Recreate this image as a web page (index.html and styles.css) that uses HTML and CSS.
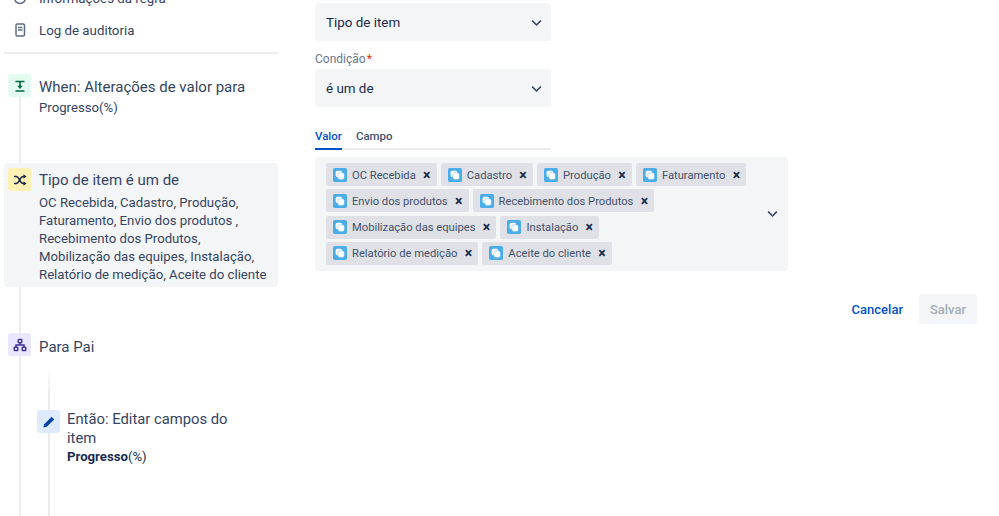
FILE: index.html
```html
<!DOCTYPE html>
<html lang="pt">
<head>
<meta charset="utf-8">
<title>Regra</title>
<link rel="stylesheet" href="styles.css">
</head>
<body>
<div class="page">
  <aside class="side">
    <div class="navrow">
      <svg class="navicon" viewBox="0 0 16 16"><circle cx="8" cy="8" r="5.500" fill="none" stroke="#5e6c84" stroke-width="1.500"/></svg>
      <span>Informações da regra</span>
    </div>
    <div class="navrow">
      <svg class="navicon" viewBox="0 0 16 16"><rect x="4" y="2" width="8.500" height="12" rx="1.300" fill="none" stroke="#5e6c84" stroke-width="1.500"/><path d="M6 5.500h4.500M6 8h4.500" stroke="#5e6c84" stroke-width="1.300"/></svg>
      <span>Log de auditoria</span>
    </div>
    <div class="rule"></div>
    <div class="flow">
      <div class="step step-trigger">
        <span class="badge badge-green">
          <svg viewBox="0 0 14 14"><path d="M2.500 2.500h9M2.500 12h9" stroke="#006644" stroke-width="1.600"/><path d="M7 3v5" stroke="#006644" stroke-width="1.600"/><path d="M4.300 6.800h5.400L7 10z" fill="#006644"/></svg>
        </span>
        <div class="stepbody">
          <div class="steptitle">When: Alterações de valor para</div>
          <div class="stepdesc">Progresso(%)</div>
        </div>
      </div>
      <div class="step step-cond">
        <span class="badge badge-yellow">
          <svg viewBox="0 0 14 14"><path d="M1 3.500h2.400c2.800 0 3.600 7 6.600 7h2M1 10.500h2.400c2.800 0 3.600-7 6.600-7h2" fill="none" stroke="#172b4d" stroke-width="1.500"/><path d="M10.500 1.300l3 2.200-3 2.200zM10.500 8.300l3 2.200-3 2.200z" fill="#172b4d"/></svg>
        </span>
        <div class="stepbody">
          <div class="steptitle">Tipo de item é um de</div>
          <div class="stepdesc">OC Recebida, Cadastro, Produção,<br>Faturamento, Envio dos produtos ,<br>Recebimento dos Produtos,<br>Mobilização das equipes, Instalação,<br>Relatório de medição, Aceite do cliente</div>
        </div>
      </div>
      <div class="step step-parent">
        <span class="badge badge-purple">
          <svg viewBox="0 0 14 14"><g fill="none" stroke="#403294" stroke-width="1.400"><rect x="5.200" y="1.500" width="3.600" height="3.200" rx=".6"/><rect x="1.200" y="9.300" width="3.600" height="3.200" rx=".6"/><rect x="9.200" y="9.300" width="3.600" height="3.200" rx=".6"/><path d="M7 4.700V7M3 9.300V7h8v2.300"/></g></svg>
        </span>
        <div class="stepbody"><div class="steptitle">Para Pai</div></div>
      </div>
      <div class="branch">
        <div class="step step-action">
          <span class="badge badge-blue">
            <svg viewBox="0 0 14 14"><path d="M9.600 1.800l2.600 2.600-7.400 7.400-3.400.8.800-3.400z" fill="#0747a6"/></svg>
          </span>
          <div class="stepbody">
            <div class="steptitle">Então: Editar campos do item</div>
            <div class="stepdesc stepdesc-strong"><b>Progresso</b>(%)</div>
          </div>
        </div>
      </div>
    </div>
  </aside>

  <main class="form">
    <div class="select">
      <span>Tipo de item</span>
      <svg class="chev" viewBox="0 0 14 9"><path d="M1.500 1.500L7 7l5.500-5.500" fill="none" stroke="#344563" stroke-width="2"/></svg>
    </div>
    <label class="label">Condição<span class="req">*</span></label>
    <div class="select">
      <span>é um de</span>
      <svg class="chev" viewBox="0 0 14 9"><path d="M1.500 1.500L7 7l5.500-5.500" fill="none" stroke="#344563" stroke-width="2"/></svg>
    </div>
    <div class="tabs">
      <span class="tab tab-active">Valor</span>
      <span class="tab">Campo</span>
    </div>
    <div class="multi">
      <div class="tags">
        <span class="tag"><svg class="tagicon" viewBox="0 0 16 16"><use href="#ti"/></svg><span>OC Recebida</span><i class="x">×</i></span>
        <span class="tag"><svg class="tagicon" viewBox="0 0 16 16"><use href="#ti"/></svg><span>Cadastro</span><i class="x">×</i></span>
        <span class="tag"><svg class="tagicon" viewBox="0 0 16 16"><use href="#ti"/></svg><span>Produção</span><i class="x">×</i></span>
        <span class="tag"><svg class="tagicon" viewBox="0 0 16 16"><use href="#ti"/></svg><span>Faturamento</span><i class="x">×</i></span>
        <span class="tag"><svg class="tagicon" viewBox="0 0 16 16"><use href="#ti"/></svg><span>Envio dos produtos</span><i class="x">×</i></span>
        <span class="tag"><svg class="tagicon" viewBox="0 0 16 16"><use href="#ti"/></svg><span>Recebimento dos Produtos</span><i class="x">×</i></span>
        <span class="tag"><svg class="tagicon" viewBox="0 0 16 16"><use href="#ti"/></svg><span>Mobilização das equipes</span><i class="x">×</i></span>
        <span class="tag"><svg class="tagicon" viewBox="0 0 16 16"><use href="#ti"/></svg><span>Instalação</span><i class="x">×</i></span>
        <span class="tag"><svg class="tagicon" viewBox="0 0 16 16"><use href="#ti"/></svg><span>Relatório de medição</span><i class="x">×</i></span>
        <span class="tag"><svg class="tagicon" viewBox="0 0 16 16"><use href="#ti"/></svg><span>Aceite do cliente</span><i class="x">×</i></span>
      </div>
      <svg class="chev" viewBox="0 0 14 9"><path d="M1.500 1.500L7 7l5.500-5.500" fill="none" stroke="#344563" stroke-width="2"/></svg>
    </div>
    <div class="actions">
      <span class="btn-link">Cancelar</span>
      <span class="btn-disabled">Salvar</span>
    </div>
  </main>
</div>
<svg class="defs" width="0" height="0"><defs><g id="ti"><rect width="16" height="16" rx="2" fill="#4bade8"/><rect x="3" y="3" width="7.500" height="7.500" rx="2" fill="#fff"/><rect x="5.500" y="5.500" width="7.500" height="7.500" rx="2" fill="#fff" stroke="#4bade8" stroke-width=".5"/></g></defs></svg>
</body>
</html>
```
FILE: styles.css
```css
* { box-sizing: border-box; }
html, body { margin: 0; height: 100%; overflow: hidden; background: #fff; }
body { font-family: Roboto, "Noto Sans", sans-serif; color: #253858; }
.defs { position: absolute; }

.page { display: flex; align-items: flex-start; height: 516px; overflow: hidden; padding-left: 4px; }

.side { width: 274px; flex: none; margin-top: -18px; }
.navrow { display: flex; align-items: center; gap: 11px; height: 32px; padding-left: 8px; font-size: 13.300px; color: #344563; }
.navicon { width: 16px; height: 16px; flex: none; }
.rule { height: 2px; background: #ebecf0; margin-top: 6px; }

.flow { position: relative; margin-top: 20px; height: 480px; }
.flow::before { content: ""; position: absolute; left: 15px; top: 0; bottom: 0; width: 2px; background: #ebecf0; }

.step { position: relative; display: flex; gap: 8px; padding-left: 4px; }
.badge { flex: none; width: 23px; height: 23px; border-radius: 3px; display: flex; align-items: center; justify-content: center; }
.badge svg { width: 14px; height: 14px; }
.badge-green { background: #e3fcef; }
.badge-yellow { background: #fff0b3; }
.badge-purple { background: #eae6ff; }
.badge-blue { background: #deebff; }
.stepbody { flex: 1; min-width: 0; }
.steptitle { font-size: 15px; line-height: 19px; color: #344563; padding-top: 3px; }
.stepdesc { font-size: 13.200px; line-height: 18px; color: #344563; }

.step-trigger { height: 89px; }
.step-trigger .steptitle { padding-top: 4px; }
.step-trigger .stepdesc { margin-top: 2px; }
.step-cond { background: #f4f5f7; border-radius: 4px; padding-top: 5px; padding-bottom: 4px; height: 124px; }
.step-cond .stepdesc { margin-top: 4px; }
.step-parent { margin-top: 46px; }
.step-parent .steptitle { padding-top: 5px; }
.branch { position: relative; margin-left: 29px; padding-top: 53px; }
.branch::before { content: ""; position: absolute; left: 15px; top: 7px; height: 160px; width: 2px; background: linear-gradient(#fff, #ebecf0 30px); }
.step-action { width: 216px; gap: 7px; }
.step-action .steptitle { padding-top: 0; font-size: 14.800px; }
.stepdesc-strong { color: #172b4d; }
.stepdesc-strong b { font-weight: 700; }

.form { width: 662px; margin-left: 37px; padding-top: 3px; flex: none; }
.select { width: 236px; height: 38px; background: #f4f5f7; border-radius: 4px; display: flex; align-items: center; justify-content: space-between; padding: 1px 9px 0 11px; font-size: 13.400px; color: #172b4d; }
.chev { width: 11px; height: 8px; flex: none; }
.label { display: block; margin: 11px 0 2px; font-size: 12px; line-height: 15px; color: #6b778c; }
.req { color: #de350b; margin-left: 1px; }
.tabs { width: 236px; display: flex; gap: 14px; margin-top: 20px; border-bottom: 2px solid #ebecf0; height: 23px; padding-top: 2px; font-size: 11.500px; font-weight: 500; line-height: 15px; color: #42526e; }
.tab { display: block; height: 21px; }
.tab-active { color: #0052cc; border-bottom: 2px solid #0052cc; }
.multi { width: 473px; min-height: 114px; margin-top: 7px; background: #f4f5f7; border-radius: 4px; padding: 6px 10px 6px 11px; display: flex; align-items: center; justify-content: space-between; }
.tags { width: 425px; display: flex; flex-wrap: wrap; gap: 3.300px 4px; }
.tag { height: 23px; background: #dfe1e6; border-radius: 2px; display: inline-flex; align-items: center; padding: 1px 3px 0 7px; font-size: 11.200px; color: #42526e; }
.tagicon { width: 14px; height: 14px; flex: none; margin: -1px 5px 0 0; }
.x { font-style: normal; font-weight: 700; font-size: 14px; color: #172b4d; width: 14px; text-align: center; margin: -1px 0 0 4px; line-height: 1; }
.actions { display: flex; justify-content: flex-end; align-items: center; gap: 16px; margin-top: 23px; font-size: 13px; font-weight: 500; }
.btn-link { color: #0052cc; }
.btn-disabled { width: 58px; height: 30px; background: #f4f5f7; border-radius: 3px; color: #a5adba; display: flex; align-items: center; justify-content: center; }
```
